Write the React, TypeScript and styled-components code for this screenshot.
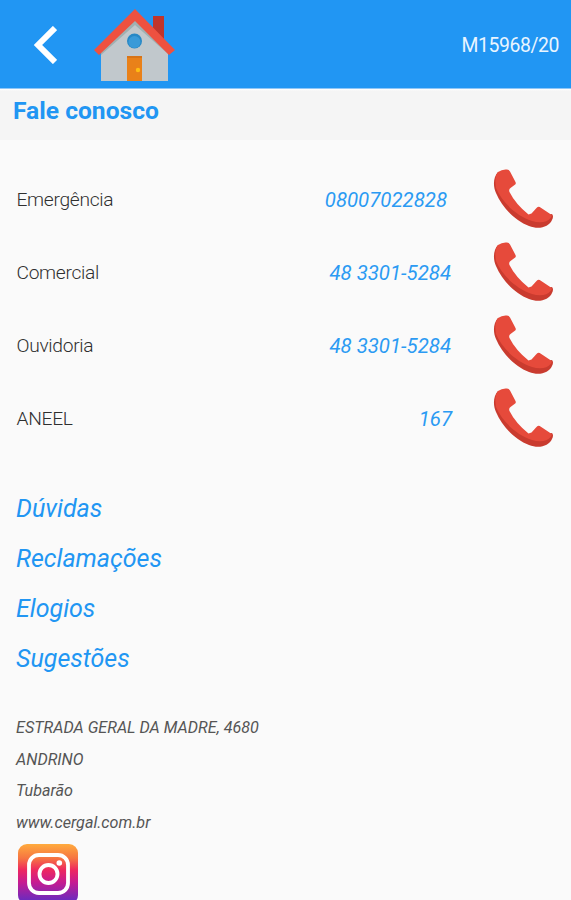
import React from "react";
import styled, { createGlobalStyle } from "styled-components";

const GlobalStyle = createGlobalStyle`
  *, *::before, *::after { box-sizing: border-box; }
  html, body { margin: 0; padding: 0; background: #fafafa; }
  body { font-family: Roboto, "Liberation Sans", sans-serif; color: #444; overflow: hidden; }
`;

const Screen = styled.div`
  width: 571px;
  height: 900px;
  overflow: hidden;
  display: flex;
  flex-direction: column;
  background: #fafafa;
`;

const AppBar = styled.header`
  flex: none;
  height: 89px;
  display: flex;
  align-items: flex-start;
  background: #2196f3;
  border-bottom: 1px solid #8fc7f8;
`;

const BackButton = styled.button`
  margin: 26px 0 0 33px;
  padding: 0;
  width: 24px;
  height: 38px;
  border: 0;
  background: none;
  svg { display: block; }
`;

const HomeButton = styled(BackButton)`
  margin: 8px 0 0 37px;
  width: 82px;
  height: 76px;
`;

const Registration = styled.span`
  margin: 34px 12px 0 auto;
  font-size: 19.4px;
  letter-spacing: -0.4px;
  line-height: 24px;
  color: #e9f5ff;
`;

const TitleBar = styled.div`
  flex: none;
  height: 51px;
  padding: 7px 13px 0;
  background: linear-gradient(#fff 0, #f5f5f5 2px);
`;

const Title = styled.h1`
  margin: 0;
  font-size: 24.6px;
  line-height: 29px;
  font-weight: 700;
  color: #2196f3;
`;

const Contacts = styled.section`
  flex: none;
  padding: 22px 18px 0 16.5px;
`;

const ContactRow = styled.div`
  height: 73px;
  display: flex;
  align-items: center;
`;

const ContactLabel = styled.span`
  padding-top: 3px;
  font-size: 19.2px;
  font-weight: 300;
  letter-spacing: -0.3px;
  line-height: 24px;
  color: #2f2f2f;
`;

const PhoneNumber = styled.a<{ $gap: number }>`
  margin-left: auto;
  margin-right: ${(p) => p.$gap}px;
  padding-top: 2px;
  font-size: 20.4px;
  line-height: 24px;
  font-style: italic;
  color: #2b9af3;
`;

const CallIcon = styled.svg`
  display: block;
  flex: none;
  width: 60px;
  height: 60px;
`;

const Links = styled.nav`
  flex: none;
  display: flex;
  flex-direction: column;
  padding: 30px 16px 0;
`;

const TopicLink = styled.a`
  font-size: 25px;
  line-height: 50px;
  font-style: italic;
  color: #2196f3;
`;

const Address = styled.address`
  flex: none;
  padding: 28px 16px 0;
  font-size: 16.15px;
  line-height: 31.7px;
  font-style: italic;
  color: #555;
`;

const AddressLine = styled.div``;

const InstagramLink = styled.a`
  display: block;
  margin: 5px 0 0 18px;
  svg { display: block; }
`;

const House = () => (
  <svg width="82" height="76" viewBox="0 0 82 76">
    <path d="M59 8h11v27L59 25z" fill="#c0352c" />
    <path d="M7 42 41 11l33 31v31H7z" fill="#c1c8cc" />
    <path d="M7 42 41 10l33 32v4L41 17 7 47z" fill="#a0b1b2" />
    <path d="m0 42 41-41 40 41-6 5-34-34L5 47z" fill="#ee5140" />
    <circle cx="40.5" cy="33" r="7.5" fill="#2788c5" />
    <circle cx="40.5" cy="34" r="6" fill="#399ad8" />
    <path d="M33 48h15v25H33z" fill="#e98119" />
    <path d="M33 48h15v2H33z" fill="#d77418" />
    <circle cx="44" cy="62" r="2.2" fill="#ffbd13" />
  </svg>
);

const Phone = () => (
  <CallIcon viewBox="0 0 60 60">
    <path
      d="M5 3C0 8 0 18 3 24c6 14 19 28 33 33 10 4 20 1 23-6q2-4 0-6L38 49 16 29 7 8z"
      fill="#c93b2f"
    />
    <path
      d="M5 3Q9 0 14 .5q2 0 3 2L22.5 13q1 2-1 3l-4 3q-2 1.500-1 4 6 12 19 22.500l3-1 5-5.500q2-2 4-.5l10.500 7q1.500 1 0 3C54 54 46 54 39 52 22 46 9 33 3 19Q1 8 5 3Z"
      fill="#e64a3b"
    />
  </CallIcon>
);

const Instagram = () => (
  <svg width="60" height="60" viewBox="0 0 60 60">
    <defs>
      <linearGradient id="instagramFill" x1="0" y1="0" x2="0" y2="1">
        <stop offset="0" stopColor="#ffab3d" />
        <stop offset=".24" stopColor="#f67442" />
        <stop offset=".43" stopColor="#ee285f" />
        <stop offset=".64" stopColor="#c61b91" />
        <stop offset="1" stopColor="#592ec7" />
      </linearGradient>
    </defs>
    <rect width="60" height="60" rx="9" fill="url(#instagramFill)" />
    <rect x="11" y="11" width="39" height="38" rx="10" fill="none" stroke="#fff" strokeWidth="3.8" />
    <circle cx="30.5" cy="30" r="9" fill="none" stroke="#fff" strokeWidth="3.8" />
    <circle cx="41.3" cy="19" r="2.8" fill="#fff" />
  </svg>
);

const contacts = [
  { label: "Emergência", number: "08007022828", gap: 46 },
  { label: "Comercial", number: "48 3301-5284", gap: 42 },
  { label: "Ouvidoria", number: "48 3301-5284", gap: 42 },
  { label: "ANEEL", number: "167", gap: 41 },
];
const topics = ["Dúvidas", "Reclamações", "Elogios", "Sugestões"];
const address = ["ESTRADA GERAL DA MADRE, 4680", "ANDRINO", "Tubarão", "www.cergal.com.br"];

export default function App() {
  return (
    <>
      <GlobalStyle />
      <Screen>
        <AppBar>
          <BackButton aria-label="Voltar">
            <svg width="24" height="38" viewBox="0 0 24 38" fill="none" stroke="#fff" strokeWidth="6">
              <path d="M22 2 5 19l17 17" />
            </svg>
          </BackButton>
          <HomeButton aria-label="Início">
            <House />
          </HomeButton>
          <Registration>M15968/20</Registration>
        </AppBar>
        <TitleBar>
          <Title>Fale conosco</Title>
        </TitleBar>
        <Contacts>
          {contacts.map((c) => (
            <ContactRow key={c.label}>
              <ContactLabel>{c.label}</ContactLabel>
              <PhoneNumber $gap={c.gap}>{c.number}</PhoneNumber>
              <Phone />
            </ContactRow>
          ))}
        </Contacts>
        <Links>
          {topics.map((t) => (
            <TopicLink key={t}>{t}</TopicLink>
          ))}
        </Links>
        <Address>
          {address.map((line) => (
            <AddressLine key={line}>{line}</AddressLine>
          ))}
        </Address>
        <InstagramLink aria-label="Instagram">
          <Instagram />
        </InstagramLink>
      </Screen>
    </>
  );
}
